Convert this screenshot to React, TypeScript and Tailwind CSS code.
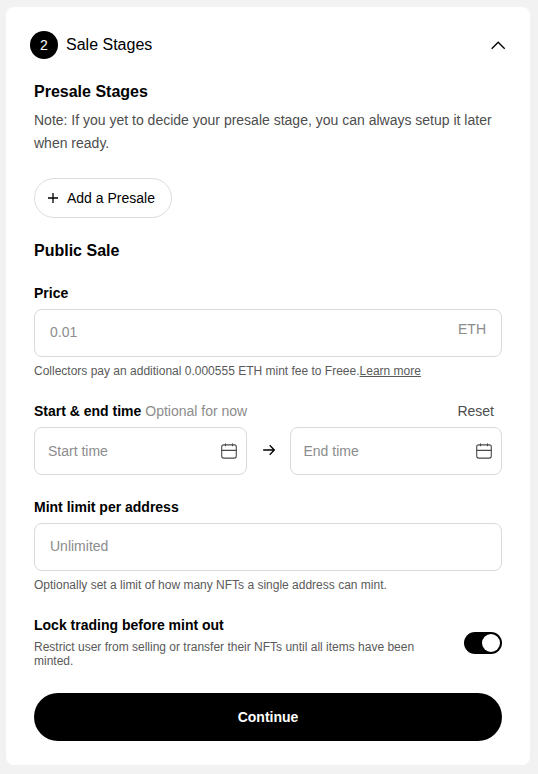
import { useState } from "react";

function CalendarIcon() {
  return (
    <svg width="16" height="16" viewBox="0 0 16 16" fill="none" stroke="#4a4a4a" strokeWidth="1.1" strokeLinecap="round" className="shrink-0">
      <rect x="0.7" y="1.9" width="14.6" height="13.2" rx="2" />
      <path d="M1 7.4h14M4.5 0.9v1.9M11.5 0.9v1.9" />
    </svg>
  );
}

function DateField({ label, className }: { label: string; className: string }) {
  return (
    <div className={"flex h-12 items-center justify-between rounded-lg border border-[#d9d9de] pr-[9px] " + className}>
      <span className="text-sm text-[#8c8c8c]">{label}</span>
      <CalendarIcon />
    </div>
  );
}

export default function App() {
  const [locked, setLocked] = useState(true);
  return (
    <div className="h-[774px] w-[538px] bg-[#f2f2f2] pl-1.5 pr-2 pt-[7px] font-['Liberation_Sans',Arial,sans-serif] text-black">
      <main className="h-[758px] rounded-lg bg-white px-7 pt-6">
        <header className="-mx-1 flex h-7 items-center justify-between">
          <div className="flex items-center gap-2">
            <span className="flex size-7 items-center justify-center rounded-full bg-black text-sm text-white">2</span>
            <h1 className="text-base">Sale Stages</h1>
          </div>
          <svg width="16" height="16" viewBox="0 0 16 16" fill="none" stroke="#000" strokeWidth="1.3">
            <path d="M1.7 11.7L8.2 5.2l6.5 6.5" />
          </svg>
        </header>

        <h2 className="mt-[21px] text-base font-bold">Presale Stages</h2>
        <p className="mt-[5px] text-sm leading-[23px] text-[#4d4d4d]">
          Note: If you yet to decide your presale stage, you can always setup it later when ready.
        </p>
        <button className="mt-[23px] flex h-10 w-[138px] items-center rounded-full border border-[#dcdce1] pl-[13px] text-sm">
          <svg width="10" height="10" viewBox="0 0 10 10" stroke="#000" strokeWidth="1.3" className="mr-[9px]">
            <path d="M0 5h10M5 0v10" />
          </svg>
          Add a Presale
        </button>

        <h2 className="mt-[21px] text-base font-bold">Public Sale</h2>
        <h3 className="mt-5 text-sm font-bold">Price</h3>
        <div className="mt-1.5 flex h-12 justify-between rounded-lg border border-[#d9d9de] px-[15px]">
          <input className="w-40 pb-0.5 text-sm outline-none placeholder:text-[#8c8c8c]" placeholder="0.01" />
          <span className="pt-[9px] text-sm text-[#8c8c8c]">ETH</span>
        </div>
        <p className="mt-1.5 text-xs text-[#5a5a5a]">
          Collectors pay an additional 0.000555 ETH mint fee to Freee.<a className="underline">Learn more</a>
        </p>

        <div className="mt-[22px] flex justify-between pr-2 text-sm">
          <h3 className="font-bold">
            Start &amp; end time <span className="font-normal text-[#8c8c8c]">Optional for now</span>
          </h3>
          <button className="text-[#4d4d4d]">Reset</button>
        </div>
        <div className="mt-1.5 flex items-center justify-between">
          <DateField label="Start time" className="w-[213px] pl-[13px]" />
          <svg width="12" height="12" viewBox="0 0 12 12" fill="none" stroke="#000" strokeWidth="1.3" className="mb-0.5">
            <path d="M0.2 6h11M6.7 1.2L11.3 6l-4.6 4.8" />
          </svg>
          <DateField label="End time" className="w-[212px] pl-[12.5px]" />
        </div>

        <h3 className="mt-[22px] text-sm font-bold">Mint limit per address</h3>
        <input className="mt-1.5 block h-12 w-full rounded-lg border border-[#d9d9de] px-[15px] pb-0.5 text-sm outline-none placeholder:text-[#8c8c8c]" placeholder="Unlimited" />
        <p className="mt-1.5 text-xs text-[#5a5a5a]">Optionally set a limit of how many NFTs a single address can mint.</p>

        <div className="mt-[22px] flex items-center justify-between">
          <div className="w-[400px]">
            <h3 className="text-sm font-bold">Lock trading before mint out</h3>
            <p className="mt-[5px] text-xs leading-[14px] text-[#5a5a5a]">
              Restrict user from selling or transfer their NFTs until all items have been minted.
            </p>
          </div>
          <button
            role="switch"
            aria-checked={locked}
            onClick={() => setLocked(!locked)}
            className={locked ? "mt-0.5 flex h-[22px] w-[38px] items-center justify-end rounded-full bg-black p-0.5" : "mt-0.5 flex h-[22px] w-[38px] items-center justify-start rounded-full bg-gray-300 p-0.5"}
          >
            <span className="size-[18px] rounded-full bg-white" />
          </button>
        </div>

        <button className="mt-[25px] h-12 w-full rounded-full bg-black text-sm font-bold text-white">Continue</button>
      </main>
    </div>
  );
}
